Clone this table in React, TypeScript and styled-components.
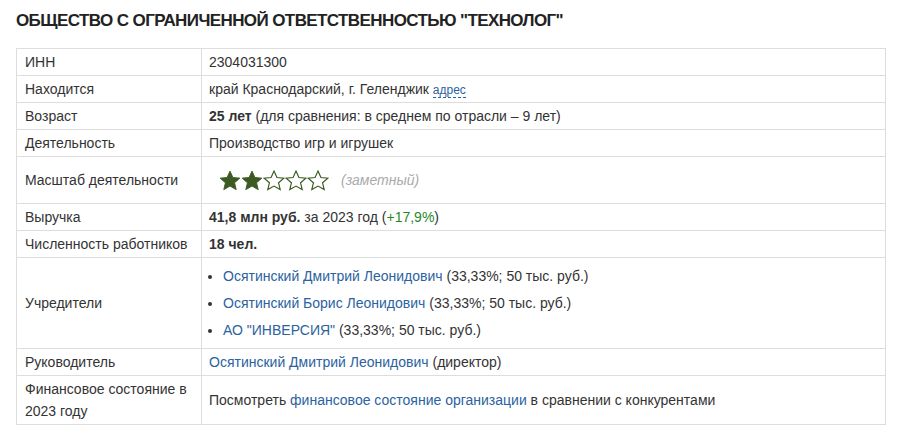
import styled, { createGlobalStyle } from 'styled-components';

const GlobalStyle = createGlobalStyle`
    body {
        margin: 0;
        background: #fff;
        font-family: "Liberation Sans", Arial, sans-serif;
        color: #333;
    }
`;

const Container = styled.div`
    padding: 10px 16px 14px;
`;

const Title = styled.h1`
    margin: 0 0 17px;
    font-size: 17px;
    line-height: 21px;
    letter-spacing: -0.6px;
    font-weight: bold;
    color: #222;
`;

const Table = styled.table`
    width: 870px;
    border-collapse: collapse;
    font-size: 14px;
    line-height: 22px;
`;

const Label = styled.td`
    width: 168px;
    padding: 2px 8px;
    border: 1px solid #ddd;
    vertical-align: middle;
`;

const Value = styled.td`
    padding: 2px 7px;
    border: 1px solid #ddd;
    vertical-align: middle;
`;

const A = styled.a`
    color: #2b62a0;
    text-decoration: none;
`;

const Dashed = styled.span`
    color: #2b62a0;
    font-size: 12px;
    border-bottom: 1px dashed #2b62a0;
    line-height: 14px;
`;

const Growth = styled.span`
    color: #1f8a1f;
`;

const Rating = styled.div`
    display: flex;
    align-items: center;
    padding: 10px 0 10px 10px;
`;

const Stars = styled.div`
    display: flex;
`;

const Hint = styled.span`
    margin-left: 12px;
    color: #aaa;
    font-style: italic;
`;

const FounderList = styled.ul`
    margin: 5px 0;
    padding: 0 0 0 14px;
    li {
        margin: 5px 0;
    }
`;

const Star = ({ filled }: { filled: boolean }) => (
    <svg width="22" height="21" viewBox="0 0 24 23">
        <path
            d="M12 1.2l3.2 7 7.6.7-5.8 5.1 1.8 7.5L12 17.6l-6.8 3.9 1.8-7.5L1.2 8.9l7.6-.7z"
            fill={filled ? '#3c5a22' : '#fff'}
            stroke="#3c5a22"
            strokeWidth={filled ? 1 : 1.3}
        />
    </svg>
);

const founders = [
    { name: 'Осятинский Дмитрий Леонидович', share: '(33,33%; 50 тыс. руб.)' },
    { name: 'Осятинский Борис Леонидович', share: '(33,33%; 50 тыс. руб.)' },
    { name: 'АО "ИНВЕРСИЯ"', share: '(33,33%; 50 тыс. руб.)' },
];

function App() {
    return (
        <Container>
            <GlobalStyle />
            <Title>ОБЩЕСТВО С ОГРАНИЧЕННОЙ ОТВЕТСТВЕННОСТЬЮ "ТЕХНОЛОГ"</Title>
            <Table>
                <tbody>
                    <tr>
                        <Label>ИНН</Label>
                        <Value>2304031300</Value>
                    </tr>
                    <tr>
                        <Label>Находится</Label>
                        <Value>
                            край Краснодарский, г. Геленджик <Dashed>адрес</Dashed>
                        </Value>
                    </tr>
                    <tr>
                        <Label>Возраст</Label>
                        <Value>
                            <b>25 лет</b> (для сравнения: в среднем по отрасли – 9 лет)
                        </Value>
                    </tr>
                    <tr>
                        <Label>Деятельность</Label>
                        <Value>Производство игр и игрушек</Value>
                    </tr>
                    <tr>
                        <Label>Масштаб деятельности</Label>
                        <Value>
                            <Rating>
                                <Stars>
                                    {[1, 2, 3, 4, 5].map((i) => (
                                        <Star key={i} filled={i <= 2} />
                                    ))}
                                </Stars>
                                <Hint>(заметный)</Hint>
                            </Rating>
                        </Value>
                    </tr>
                    <tr>
                        <Label>Выручка</Label>
                        <Value>
                            <b>41,8 млн руб.</b> за 2023 год (<Growth>+17,9%</Growth>)
                        </Value>
                    </tr>
                    <tr>
                        <Label>Численность работников</Label>
                        <Value>
                            <b>18 чел.</b>
                        </Value>
                    </tr>
                    <tr>
                        <Label>Учредители</Label>
                        <Value>
                            <FounderList>
                                {founders.map((f) => (
                                    <li key={f.name}>
                                        <A href="#">{f.name}</A> {f.share}
                                    </li>
                                ))}
                            </FounderList>
                        </Value>
                    </tr>
                    <tr>
                        <Label>Руководитель</Label>
                        <Value>
                            <A href="#">Осятинский Дмитрий Леонидович</A> (директор)
                        </Value>
                    </tr>
                    <tr>
                        <Label>Финансовое состояние в 2023 году</Label>
                        <Value>
                            Посмотреть <A href="#">финансовое состояние организации</A> в
                            сравнении с конкурентами
                        </Value>
                    </tr>
                </tbody>
            </Table>
        </Container>
    );
}

export default App;
